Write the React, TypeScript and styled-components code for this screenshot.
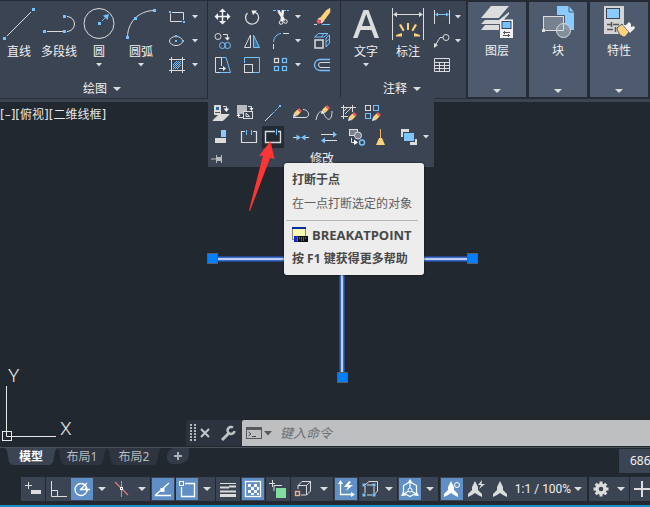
import React from 'react';
import styled, { createGlobalStyle, css } from 'styled-components';

const C = {
  ribbon: '#3b4453',
  dark: '#222830',
  edge: '#252b37',
  card: '#4e5b6e',
  gray: '#dcdcdc',
  blue: '#74c2ff',
  active: '#5f8fc4',
  gold: '#ffd27a',
  red: '#f2575c',
};

const Global = createGlobalStyle`
  * { box-sizing: border-box; }
  body {
    margin: 0;
    background: ${C.dark};
    color: #f0f0f0;
    font: 12px/16px "Noto Sans", "Noto Sans CJK SC", sans-serif;
    overflow: hidden;
  }
  button, input { font: inherit; color: inherit; border: 0; padding: 0; margin: 0; background: none; }
`;

const Page = styled.div`
  display: flex;
  flex-direction: column;
  min-height: 100vh;
  overflow: hidden;
`;

/* ---------- ribbon ---------- */

const Ribbon = styled.header`
  display: flex;
  background: ${C.ribbon};
  border-top: 1px solid ${C.edge};
  position: relative;
  z-index: 2;
  padding-bottom: 4px;
  box-shadow: inset 0 -3px ${C.ribbon}, inset 0 -4px ${C.edge};
`;

const Panel = styled.section<{ $w: number }>`
  position: relative;
  flex: 0 0 ${p => p.$w}px;
  display: flex;
  flex-direction: column;
  height: 97px;
  border-right: 1px solid ${C.edge};
`;

const PanelBody = styled.div<{ $pad?: number }>`
  display: flex;
  padding-left: ${p => p.$pad ?? 0}px;
  height: 80px;
`;

const PanelTitle = styled.button`
  display: flex;
  align-items: center;
  justify-content: center;
  gap: 6px;
  height: 16px;
  padding-right: 3px;
`;

const LargeButton = styled.button<{ $w: number }>`
  width: ${p => p.$w}px;
  display: flex;
  flex-direction: column;
  align-items: center;
  padding-top: 7px;
  white-space: nowrap;
  gap: 3px;

  span { margin-top: 1px; }
`;

const SmallColumn = styled.div`
  display: flex;
  flex-direction: column;
  padding: 4px 0 0 3px;
`;

const ToolGrid = styled.div`
  display: grid;
  grid-template-columns: 20px 20px 30px 20px;
  grid-auto-rows: 24px;
  column-gap: 10px;
  padding: 4px 0 0 4px;
`;

const Tool = styled.button<{ $gap?: number }>`
  display: flex;
  align-items: center;
  gap: ${p => p.$gap ?? 4}px;
  height: 24px;
`;

const Cards = styled.div`
  display: flex;
  gap: 3px;
  padding-left: 1px;
  background: ${C.edge};
`;

const Card = styled.button`
  width: 58px;
  height: 96px;
  background: ${C.card};
  display: flex;
  flex-direction: column;
  align-items: center;
  padding: 4px 0 4px;
  gap: 5px;
  border-top: 1px solid ${C.edge};

  > :last-child { margin-top: auto; }
`;

const CardEnd = styled.div`
  width: 1px;
`;

/* ---------- expanded modify panel ---------- */

const Flyout = styled.div`
  position: absolute;
  left: 0;
  top: 96px;
  width: 226px;
  background: ${C.ribbon};
  padding: 4px 1px 0;
`;

const FlyRow = styled.div`
  display: flex;
  height: 24px;
`;

const FlyTool = styled.button<{ $space?: boolean; $on?: boolean }>`
  width: 24px;
  height: 24px;
  display: flex;
  align-items: center;
  justify-content: center;
  margin-left: ${p => (p.$space ? 4 : 0)}px;
  ${p => p.$on && css`
    background: #222a34;
    background-clip: content-box;
    padding: 1px;
  `}
`;

const FlyMore = styled(Tool)`
  margin-left: 2px;
`;

const FlyFooter = styled.div`
  display: flex;
  align-items: center;
  height: 18px;
  padding: 1px 0 0 2px;

  span { margin-left: 87px; }
`;

const Tip = styled.div`
  position: absolute;
  left: 76px;
  top: 162px;
  width: 140px;
  height: 112px;
  padding: 9px 6px 0 2px;
  background: #ededed;
  border-radius: 3px;
  white-space: nowrap;
  box-shadow: 0 0 2px #111;
`;

const TipLine = styled.div<{ $bold?: boolean }>`
  display: flex;
  align-items: center;
  gap: 4px;
  height: 16px;
  margin: 0 0 8px 6px;
  font-weight: ${p => (p.$bold ? 700 : 400)};
  color: ${p => (p.$bold ? '#484848' : '#606060')};
`;

const CommandName = styled.span`
  font: 700 13px/16px "Open Sans", sans-serif;
`;

const TipRule = styled.hr`
  border: 0;
  height: 1px;
  margin: 0 0 6px;
  background: #b4b4b4;
`;

const Pointer = styled.svg`
  position: absolute;
  left: 38px;
  top: 138px;
  pointer-events: none;
`;

/* ---------- drawing area ---------- */

const Canvas = styled.main`
  position: relative;
  flex: 1;
  display: flex;
  flex-direction: column;
  justify-content: space-between;
  border-bottom: 1px solid #4b4f56;
`;

const ViewLabel = styled.div`
  padding-top: 5px;
  color: #e6e6e6;
  font-family: "DejaVu Sans", "Noto Sans CJK SC", sans-serif;
`;

const Geometry = styled.svg`
  position: absolute;
  left: 206px;
  top: 150px;
`;

const Ucs = styled.svg`
  position: absolute;
  left: 0;
  bottom: 4px;
`;

const CommandBar = styled.form`
  display: flex;
  height: 26px;
  margin: 0 0 1px 186px;
  background: #2c333f;
  border-radius: 3px 0 0 0;
`;

const CommandTools = styled.div`
  flex: 0 0 56px;
  display: flex;
  align-items: center;
  gap: 4px;
  padding-left: 4px;

  button { display: flex; }
`;

const CommandField = styled.label`
  flex: 1;
  display: flex;
  align-items: center;
  gap: 2px;
  padding-left: 4px;
  background: #bebfc1;
  color: #55585c;
  border-radius: 2px 0 0 0;

  input {
    flex: 1;
    min-width: 0;
    margin-left: 2px;
    font-size: 13px;
    font-style: italic;
    outline: 0;
  }
  input::placeholder { color: #6c6e71; opacity: 1; }
`;

/* ---------- layout tabs ---------- */

const TabBar = styled.nav`
  display: flex;
  height: 28px;
  padding-left: 5px;
`;

const Tab = styled.button<{ $on?: boolean; $w: number }>`
  width: ${p => p.$w}px;
  height: 17px;
  background: ${p => (p.$on ? C.ribbon : '#2e3440')};
  color: ${p => (p.$on ? '#fff' : '#b8bcc2')};
  font-weight: ${p => (p.$on ? 700 : 400)};
  clip-path: polygon(0 0, 100% 0, calc(100% - 2px) 3px, calc(100% - 4px) 14px, calc(100% - 7px) 100%, 7px 100%, 4px 14px, 2px 3px);
`;

const AddTab = styled.button`
  width: 22px;
  height: 16px;
  margin-left: 6px;
  display: flex;
  align-items: center;
  justify-content: center;
  background: #343b48;
  border-radius: 8px 0 10px 6px;
`;

const Coordinates = styled.output`
  margin: 1px 0 0 auto;
  width: 31px;
  height: 24px;
  padding-left: 11px;
  line-height: 23px;
  background: ${C.ribbon};
  overflow: hidden;
`;

/* ---------- status bar ---------- */

const StatusBar = styled.footer`
  display: flex;
  gap: 1px;
  height: 31px;
  padding: 1px 0 4px 21px;
  border-bottom: 2px solid #1e8fc6;
  overflow: hidden;
`;

const Group = styled.div<{ $w: number; $pad?: number; $apart?: number }>`
  flex: 0 0 ${p => p.$w}px;
  display: flex;
  height: 24px;
  padding: 1px 0 1px ${p => p.$pad ?? 0}px;
  margin-left: ${p => p.$apart ?? 0}px;
  background: ${C.ribbon};
  overflow: hidden;
`;

const Status = styled.button<{ $on?: boolean; $w?: number }>`
  flex: 0 0 ${p => p.$w ?? 22}px;
  height: 22px;
  display: flex;
  align-items: center;
  justify-content: center;
  background: ${p => (p.$on ? C.active : 'transparent')};
  white-space: nowrap;
`;

const ScaleValue = styled(Status)`
  font-family: Roboto, sans-serif;
`;

/* ---------- glyphs ---------- */

type IconProps = { w?: number; h?: number; children: React.ReactNode };
const Icon = ({ w = 20, h = 20, children }: IconProps) => (
  <svg width={w} height={h} viewBox={`0 0 ${w} ${h}`} fill="none" stroke={C.gray} aria-hidden="true">
    {children}
  </svg>
);

const Caret = ({ big }: { big?: boolean }) => (
  <svg width={big ? 8 : 6} height={4} viewBox={big ? '0 0 8 4' : '0 0 6 4'} aria-hidden="true">
    <path d={big ? 'M0 0H8L4 4Z' : 'M0 0H6L3 3.5Z'} fill={C.gray} />
  </svg>
);

const Dot = ({ x, y, s = 3 }: { x: number; y: number; s?: number }) => (
  <rect x={x - s / 2} y={y - s / 2} width={s} height={s} fill={C.blue} stroke="none" />
);

const LineIcon = () => (
  <Icon w={32} h={32}><path d="M4 28L28 4" /><Dot x={1.5} y={30.5} /><Dot x={30.5} y={1.5} /></Icon>
);
const PolylineIcon = () => (
  <Icon w={32} h={32}>
    <path d="M4 23.5H20M24 8.5a7.5 7.5 0 0 1 0 15" />
    <Dot x={1.5} y={23.5} /><Dot x={21.5} y={23.5} /><Dot x={21.5} y={8.5} />
  </Icon>
);
const CircleIcon = () => (
  <Icon w={32} h={32}>
    <circle cx="16" cy="15.5" r="15" /><Dot x={16.5} y={15.5} />
    <path d="M19 13L23 9" stroke={C.blue} /><path d="M26 6L20 7.500L24.500 12Z" fill={C.blue} stroke="none" />
  </Icon>
);
const ArcIcon = () => (
  <Icon w={32} h={32}>
    <path d="M2.500 29.500C2.500 14 14 2.500 29.500 2.500" />
    <Dot x={2.5} y={29.5} /><Dot x={10.5} y={10.5} /><Dot x={29.5} y={2.5} />
  </Icon>
);
const RectIcon = () => (
  <Icon><path d="M3.500 6.500V14.500H15M5 5.500H16.500V13" /><Dot x={3} y={5} s={2} /><Dot x={17} y={15} s={2} /></Icon>
);
const EllipseIcon = () => (
  <Icon><ellipse cx="9" cy="10" rx="6.500" ry="4.500" /><Dot x={9} y={10} s={2} /><Dot x={9} y={5} s={2} /><Dot x={16} y={10} s={2} /></Icon>
);
const HatchIcon = () => (
  <Icon>
    <path d="M4.500 2V18M15.500 2V18M2 4.500H18M2 15.500H18" />
    <path d="M6 10L10 6M6 14L14 6M10 14L14 10M6 12L12 6M8 14L14 8" stroke={C.blue} />
  </Icon>
);
const MoveIcon = () => (
  <Icon>
    <path d="M10.500 3V16M4 9.500H17" stroke="#f2f2f2" strokeWidth="1.500" />
    <path d="M10.500 1.500L14 5H7ZM10.500 17.500L14 14H7ZM2.500 9.500L6 6V13ZM18.500 9.500L15 6V13Z" fill="#f2f2f2" stroke="none" />
  </Icon>
);
const RotateIcon = () => (
  <Icon><path d="M5.500 6A6.500 6.500 0 1 0 15.500 7L13 5" strokeWidth="1.300" /><path d="M9.500 3.500H15L11 8Z" fill="#eee" stroke="none" /></Icon>
);
const TrimIcon = () => (
  <Icon>
    <path d="M1 3.500H8" stroke={C.blue} strokeDasharray="3 1" /><path d="M12 3.500H17" stroke={C.blue} strokeDasharray="2 1" />
    <path d="M6.500 4L12 13M11 3L9.500 14" strokeWidth="2.500" stroke="#f0f0f0" />
    <circle cx="9" cy="15.500" r="1.800" stroke="#f0f0f0" /><circle cx="13.500" cy="14.500" r="1.800" stroke="#f0f0f0" />
  </Icon>
);
const EraseIcon = () => (
  <Icon>
    <path d="M8 12L15 3.500L17.500 2V5L11 14Z" fill={C.gold} stroke={C.gold} strokeWidth="1.500" />
    <path d="M7 10.500L11.500 14.500L9.500 16.500L5.500 13Z" fill="#eee" stroke="none" /><circle cx="7" cy="14.500" r="2.300" fill={C.red} stroke="none" />
    <path d="M2 17.500H5" /><path d="M10 17.500H18" stroke={C.blue} />
  </Icon>
);
const CopyIcon = () => (
  <Icon>
    <circle cx="6" cy="5.500" r="3" /><path d="M11 3.500H15.500V7" /><path d="M12.500 6.500H18L15.500 9.500Z" fill="#eee" stroke="none" />
    <g stroke={C.blue}><circle cx="10.500" cy="14.500" r="3" /><circle cx="15.500" cy="14.500" r="3" /></g>
  </Icon>
);
const MirrorIcon = () => (
  <Icon><path d="M8.500 4V16.500H2.500Z" /><path d="M11.500 4V16.500H17.500Z" stroke={C.blue} fill="#3a739c" /></Icon>
);
const FilletIcon = () => (
  <Icon><path d="M1.500 11C2 6 5 3 9 2.500" stroke={C.blue} /><path d="M1.500 13V18M11 2.500H17" /></Icon>
);
const BoxIcon = () => (
  <Icon>
    <rect x="3" y="9" width="8" height="8" strokeWidth="1.500" />
    <path d="M2.500 6L6.500 2.500H16L12 6ZM14 7L17.500 4V12L14 16Z" stroke={C.blue} /><path d="M9 6L12 2.500M14 11L17.500 8" stroke={C.blue} />
  </Icon>
);
const StretchIcon = () => (
  <Icon><path d="M8 17.500H3.500V2.500H9.500V11" /><path d="M10 2.500H14L18.500 17.500H8" stroke={C.blue} /><path d="M7 13.500H13" /><path d="M11 11L14 13.500L11 16Z" fill="#eee" stroke="none" /></Icon>
);
const ScaleIcon = () => (
  <Icon><path d="M2.500 8V2.500H17.500V17.500H11" stroke={C.blue} /><rect x="2.500" y="9.500" width="8" height="8" /></Icon>
);
const ArrayIcon = () => (
  <Icon><rect x="2.500" y="3.500" width="4" height="4" strokeWidth="1.200" /><g stroke={C.blue} strokeWidth="1.200"><rect x="10.500" y="3.500" width="4" height="4" /><rect x="2.500" y="11.500" width="4" height="4" /><rect x="10.500" y="11.500" width="4" height="4" /></g></Icon>
);
const OffsetIcon = () => (
  <Icon><path d="M18 4.500H8A5.500 5.500 0 0 0 8 15.500H18" stroke={C.blue} strokeWidth="1.300" /><path d="M18 7.500H9A2.500 2.500 0 0 0 9 12.500H18" /></Icon>
);
const TextIcon = () => (
  <Icon w={32} h={32}><path d="M3 30L13.500 2H18.500L29 30H24.500L21.500 22H10.500L7.500 30ZM12 18H20.500L16.200 6Z" fill={C.gray} stroke="none" /></Icon>
);
const DimensionIcon = () => (
  <Icon w={32} h={32}>
    <path d="M.5 0V32M31.500 0V32M2 6.500H30" /><path d="M1 6.500L5 4V9ZM31 6.500L27 4V9Z" fill={C.gray} stroke="none" />
    <g fill={C.gold} stroke="none">
      <path d="M15 15H17V22H15Z" /><path d="M4 27L10 25V28.500H4ZM28 27L22 25V28.500H28Z" />
      <path d="M7 17L9 16L12.500 22L11 23.500ZM25 17L23 16L19.500 22L21 23.500Z" />
    </g>
  </Icon>
);
const LinearIcon = () => (
  <Icon><path d="M2.500 3V17M17.500 3V17" /><path d="M4 7.500H16" stroke={C.blue} /><path d="M3 7.500L6 5.500V9.500ZM17 7.500L14 5.500V9.500Z" fill={C.blue} stroke="none" /></Icon>
);
const LeaderIcon = () => (
  <Icon><circle cx="14" cy="6.500" r="3" /><path d="M11 6.500H8L3.500 14" /><path d="M2 17V12L6 14Z" fill={C.gray} stroke="none" /></Icon>
);
const TableIcon = () => (
  <Icon><path d="M2.500 3.500H17.500V16.500H2.500ZM2.500 7.500H17.500M2.500 10.500H17.500M2.500 13.500H17.500M7.500 7V17M12.500 7V17" /></Icon>
);

const LayersIcon = () => (
  <Icon w={32} h={32}>
    <g fill={C.gray} stroke="none"><path d="M10 0H28L18 12H0ZM4 14H18L28 6V8L19 18H0ZM4 19H18V24H0Z" /></g>
    <path d="M0 12.500H18L28 1" stroke={C.card} />
    <rect x="19" y="13.500" width="13" height="18.500" fill="#f3f3f3" stroke="none" />
    <rect x="21" y="15.500" width="9" height="7" fill={C.blue} stroke={C.ribbon} />
    <path d="M22 26.500H29M22 29.500H29M23.500 25V28M27.500 28V31" stroke="#555" />
  </Icon>
);
const BlockIcon = () => (
  <Icon w={32} h={32}>
    <path d="M15 0H27L32 6V24H15Z" fill="#8acbff" stroke="none" /><path d="M27 0V6H32" stroke={C.card} />
    <rect x="1.500" y="10.500" width="20" height="14" fill="#778190" /><rect x="0" y="23" width="3" height="3" fill={C.gray} stroke="none" />
    <path d="M0 9.500H22.500V18" stroke={C.card} /><circle cx="21.500" cy="24.500" r="7" fill="#8993a0" fillOpacity=".9" /><path d="M15 24.500H21.500V17.500" />
  </Icon>
);
const PropertiesIcon = () => (
  <Icon w={32} h={32}>
    <rect x="1" y="0" width="20" height="28" fill="#d4d4d4" stroke="none" /><rect x="3.500" y="2.500" width="13" height="10" fill="#8acbff" stroke={C.ribbon} />
    <path d="M4 18.500H8M10 18.500H16M8.500 16V21M4 23.500H10M12.500 21V26" stroke="#555" strokeWidth="1.500" />
    <path d="M14 22L19 18L26 26L22 31C18 31 15 27 14 22Z" fill={C.gold} stroke={C.card} />
    <path d="M20 19L23 19L26 16L28 18V21L31 20L32 22L29 25L27 27Z" fill="#f4f4f4" stroke="none" />
  </Icon>
);

const Pencil = ({ x, y }: { x: number; y: number }) => (
  <g stroke="none" transform={`translate(${x} ${y})`}>
    <path d="M0 9L1 5L4 8Z" fill="#e9e9e9" /><path d="M1 5L4.500 1.500L7.500 4.500L4 8Z" fill={C.gold} /><path d="M4.500 1.500L6 0L9 3L7.500 4.500Z" fill={C.red} />
  </g>
);
const SetLayerIcon = () => (
  <Icon><path d="M3.500 2.500H9.500V11.500H3.500Z" fill={C.gray} /><rect x="5" y="4" width="3" height="3" fill="#2f6da3" stroke="none" /><path d="M4 9.500H9" stroke="#555" /><path d="M2 17.500L8 11.500H18L12 17.500Z" fill={C.gray} /><path d="M12 3.500H15.500V6" /><path d="M12.500 5.500H18L15.500 9Z" fill="#fff" stroke="none" /></Icon>
);
const ChangeSpaceIcon = () => (
  <Icon><rect x="2" y="2" width="10" height="9" fill="#b8bbc0" stroke="none" /><rect x="8.500" y="8.500" width="9" height="7" fill={C.ribbon} /><path d="M11 10L14.500 13.500H11Z" /><path d="M13 3.500H16.500V6M8 14.500H3.500V12" /><path d="M14.500 5H18.500L16.500 8ZM1.500 13H5.500L3.500 10.500Z" fill="#fff" stroke="none" /></Icon>
);
const LengthenIcon = () => (
  <Icon><path d="M2 18L9 11" /><path d="M9 11L16 4" stroke={C.blue} strokeDasharray="3 1" /><Dot x={17} y={3} s={2} /></Icon>
);
const EditPolylineIcon = () => (
  <Icon><path d="M2 14.500H14C20 14.500 18 6.500 12 6.500" /><Pencil x={2} y={5} /></Icon>
);
const EditSplineIcon = () => (
  <Icon><path d="M1 17C3 8 6 7 9 11C12 18 17 19 17 8" /><Pencil x={6} y={2} /></Icon>
);
const EditHatchIcon = () => (
  <Icon><path d="M4.500 2V16M13.500 2V9M2 4.500H17M2 13.500H9M6 11L12 5M5 8L8 5" /><Pencil x={9} y={9} /></Icon>
);
const EditArrayIcon = () => (
  <Icon><rect x="2.500" y="2.500" width="5" height="5" /><g stroke={C.blue}><rect x="10.500" y="2.500" width="5" height="5" /><rect x="2.500" y="10.500" width="5" height="5" /></g><Pencil x={9} y={9} /></Icon>
);
const AlignIcon = () => (
  <Icon><rect x="10" y="3" width="5" height="7" fill="#8acbff" stroke="none" /><rect x="4" y="11" width="11" height="5" fill={C.gray} stroke="none" /></Icon>
);
const BreakIcon = () => (
  <Icon><path d="M6 4.500H2.500V15.500H17.500V4.500H14" strokeWidth="1.200" /><path d="M7.500 3V8M12.500 3V8" stroke={C.blue} /></Icon>
);
const BreakPointIcon = () => (
  <Icon><path d="M12 4.500H2.500V15.500H17.500V4.500H15" strokeWidth="1.400" /><path d="M13.500 2V8" stroke={C.blue} /></Icon>
);
const JoinIcon = () => (
  <Icon><path d="M2 10.500H6M14 10.500H18" /><path d="M10 10.500L5.500 7.500V13.500ZM10 10.500L14.500 7.500V13.500Z" fill={C.blue} stroke="none" /></Icon>
);
const ReverseIcon = () => (
  <Icon><path d="M2 7.500H15M5 13.500H18" /><path d="M18 7.500L14 4.500V10.500ZM2 13.500L6 10.500V16.500Z" fill={C.blue} stroke="none" /></Icon>
);
const CopyNestedIcon = () => (
  <Icon><rect x="2.500" y="2.500" width="8" height="6" fill="#778190" /><circle cx="11" cy="8.500" r="3.500" fill="#778190" /><path d="M4.500 11V15.500H8" /><path d="M7 12.500L11 15.500L7 18Z" fill="#fff" stroke="none" /><circle cx="15" cy="15.500" r="2.500" stroke={C.blue} strokeWidth="1.400" /></Icon>
);
const OverkillIcon = () => (
  <Icon><path d="M9.500 2V12" stroke="#f1b45e" /><path d="M8 11H11L14 18H5Z" fill={C.gold} stroke="none" /></Icon>
);
const DrawOrderIcon = () => (
  <Icon><rect x="2" y="2" width="8" height="8" fill={C.gray} stroke="none" /><rect x="11" y="12" width="7" height="6" fill={C.gray} stroke="none" /><rect x="4.500" y="5.500" width="11" height="9" fill="#7cc5ff" stroke={C.ribbon} /></Icon>
);
const PinIcon = () => (
  <Icon w={12} h={10}><path d="M0 5H5M5.500 1V9M10.500 1V9" stroke="#bbb" /><rect x="5" y="3" width="6" height="4" fill="#bbb" stroke="none" /></Icon>
);
const CommandIcon = () => (
  <svg width="16" height="18" viewBox="0 0 16 18" fill="none" aria-hidden="true">
    <rect x=".5" y="3.500" width="15" height="11" stroke="#55585c" /><path d="M0 3H16V6H0Z" fill="#55585c" /><path d="M2.500 8L5 10L2.500 12M6 12.500H10" stroke="#44474b" />
  </svg>
);
const WindowIcon = () => (
  <svg width="16" height="16" viewBox="0 0 16 16" aria-hidden="true">
    <rect x=".5" y=".5" width="13" height="12" fill="#fbf8b0" stroke="#8c8c8c" /><path d="M0 0H14V2H0Z" fill="#0b2aa8" />
    <rect x="2" y="9" width="14" height="6" fill="#111" /><path d="M2 9H6V15H2Z" fill="#1128c8" /><path d="M5 11H8M9 11H14M5 13H7M9 13H13" stroke="#aaa" strokeDasharray="1 1" />
  </svg>
);

/* status bar glyphs, 20 x 20 */
const DynInput = () => <Icon><path d="M2 6.500H9M5.500 3V10" /><rect x="8.500" y="11.500" width="9" height="3" fill={C.gray} /></Icon>;
const Ortho = () => <Icon><path d="M2.500 2V17.500H18M2.500 11.500H8.500V17.500" /></Icon>;
const Polar = () => <Icon><circle cx="9" cy="10.500" r="6" stroke="#fff" strokeWidth="1.300" /><path d="M8 10.500H18M8 11L15 4M13 8.500L15.500 12.500" stroke="#fff" strokeWidth="1.300" /></Icon>;
const Iso = () => <Icon><path d="M3 3L16 16" stroke="#e07779" strokeWidth="1.200" /><path d="M9.500 2V18" stroke="#69c08a" /><rect x="8.500" y="8.500" width="2" height="2" fill={C.ribbon} stroke="#fff" /></Icon>;
const Track = () => <Icon><path d="M2 16.500H18M2 16.500L16 4" stroke="#fff" strokeWidth="1.300" /><rect x="7.500" y="9" width="4" height="4" fill="#fff" stroke="none" /></Icon>;
const Osnap = () => <Icon><path d="M8 4.500H17.500V17.500H4.500V8" stroke="#fff" strokeWidth="1.300" /><rect x="2.500" y="2.500" width="4" height="4" stroke="#fff" /></Icon>;
const Weight = () => <Icon><path d="M2 4.500H18" /><path d="M2 8.500H11M11 7.500H18M2 12.500H11M11 12.500H18" strokeWidth="2" /><path d="M2 16.500H18" strokeWidth="3" /></Icon>;
const Transparency = () => (
  <Icon><rect x="2.500" y="2.500" width="15" height="15" stroke="#fff" strokeWidth="1.300" />
    <path d="M5 5H8V8H5ZM11 5H14V8H11ZM8 8H11V11H8ZM14 8H16V11H14ZM5 11H8V14H5ZM11 11H14V14H11ZM8 14H11V16H8ZM14 14H16V16H14Z" fill="#fff" stroke="none" /></Icon>
);
const Cycle = () => <Icon><path d="M1 4.500H7M4.500 1V8" /><path d="M6 12V6.500H14" stroke={C.gray} /><rect x="8" y="9" width="10" height="10" fill="#83dca0" stroke="none" /></Icon>;
const Osnap3d = () => <Icon><path d="M5 10V6.500L9 2.500H17.500V12L13.500 16H8M5 6.500H13.500V16M13.500 6.500L17.500 2.500" /><rect x="2.500" y="12.500" width="4" height="4" stroke="#f0ae8c" strokeWidth="1.400" /></Icon>;
const DynUcs = () => <Icon><path d="M4.500 3V15.500H17" stroke="#fff" strokeWidth="1.300" /><path d="M4.500 1L7 5H2ZM19 15.500L15 13V18ZM13 2L8 8H12L10 12L17 6H12.500L15 3Z" fill="#fff" stroke="none" /></Icon>;
const Filter = () => <Icon><path d="M5 7V14M5 6L9 2.500H17.500V12L14 16M7 6H13M14 8V14M7 16H12" /><Dot x={4} y={6} /><Dot x={14} y={6} /><Dot x={4} y={16} /><Dot x={14} y={16} /></Icon>;
const Gizmo = () => <Icon><path d="M10 3L16.500 6.500V14L10 17.500L3.500 14V6.500ZM10 3V11L4 15M10 11L16 15" stroke="#fff" strokeWidth="1.200" /><path d="M10 0L12.500 4H7.500ZM1 17L3 13L6 16.500ZM19 17L17 13L14 16.500Z" fill="#fff" stroke="none" /><circle cx="10" cy="11" r="2" stroke="#fff" fill={C.active} /></Icon>;
const Person = ({ kind }: { kind?: 'ring' | 'bolt' }) => (
  <Icon><path d="M9 2L12 8V11L16 15V18L12 16L9 14L6 16L2 18V15L6 11V8Z" fill={kind === 'ring' ? '#fff' : C.gray} stroke="none" />
    {kind === 'ring' && <circle cx="15" cy="6" r="2.500" stroke="#fff" />}
    {kind === 'bolt' && <path d="M16 1L12 6H15L13 10L19 5H15.500Z" fill={C.gray} stroke="none" />}
  </Icon>
);
const Gear = () => (
  <Icon><circle cx="10" cy="10" r="4" strokeWidth="3.500" /><g strokeWidth="3"><path d="M10 2.500V5M10 15V17.500M2.500 10H5M15 10H17.500M4.700 4.700L6.400 6.400M13.600 13.600L15.300 15.300M15.300 4.700L13.600 6.400M6.400 13.600L4.700 15.300" /></g></Icon>
);

type ToolDef = { name: string; icon: React.ReactNode; menu?: boolean; space?: boolean; on?: boolean };

const drawLarge = [
  { name: '直线', icon: <LineIcon />, w: 38 },
  { name: '多段线', icon: <PolylineIcon />, w: 42 },
  { name: '圆', icon: <CircleIcon />, w: 38, menu: true },
  { name: '圆弧', icon: <ArcIcon />, w: 46, menu: true },
];
const drawSmall: ToolDef[] = [
  { name: '矩形', icon: <RectIcon />, menu: true },
  { name: '椭圆', icon: <EllipseIcon />, menu: true },
  { name: '图案填充', icon: <HatchIcon />, menu: true },
];
const modify: ToolDef[] = [
  { name: '移动', icon: <MoveIcon /> }, { name: '旋转', icon: <RotateIcon /> },
  { name: '修剪', icon: <TrimIcon />, menu: true }, { name: '删除', icon: <EraseIcon /> },
  { name: '复制', icon: <CopyIcon /> }, { name: '镜像', icon: <MirrorIcon /> },
  { name: '圆角', icon: <FilletIcon />, menu: true }, { name: '分解', icon: <BoxIcon /> },
  { name: '拉伸', icon: <StretchIcon /> }, { name: '缩放', icon: <ScaleIcon /> },
  { name: '阵列', icon: <ArrayIcon />, menu: true }, { name: '偏移', icon: <OffsetIcon /> },
];
const annotate: ToolDef[] = [
  { name: '线性', icon: <LinearIcon />, menu: true },
  { name: '引线', icon: <LeaderIcon />, menu: true },
  { name: '表格', icon: <TableIcon /> },
];
const flyRows: ToolDef[][] = [
  [
    { name: '设为当前图层', icon: <SetLayerIcon /> }, { name: '更改空间', icon: <ChangeSpaceIcon /> },
    { name: '拉长', icon: <LengthenIcon />, space: true }, { name: '编辑多段线', icon: <EditPolylineIcon />, space: true },
    { name: '编辑样条曲线', icon: <EditSplineIcon /> }, { name: '编辑图案填充', icon: <EditHatchIcon /> },
    { name: '编辑阵列', icon: <EditArrayIcon /> },
  ],
  [
    { name: '对齐', icon: <AlignIcon /> }, { name: '打断', icon: <BreakIcon />, space: true },
    { name: '打断于点', icon: <BreakPointIcon />, on: true }, { name: '合并', icon: <JoinIcon />, space: true },
    { name: '反转', icon: <ReverseIcon />, space: true }, { name: '复制嵌套对象', icon: <CopyNestedIcon />, space: true },
    { name: '删除重复对象', icon: <OverkillIcon /> }, { name: '绘图次序', icon: <DrawOrderIcon />, space: true },
  ],
];

const SmallTool = ({ tool, gap }: { tool: ToolDef; gap?: number }) => (
  <Tool aria-label={tool.name} $gap={gap}>{tool.icon}{tool.menu && <Caret />}</Tool>
);
const Drop = ({ w = 17 }: { w?: number }) => <Status $w={w} aria-label="选项"><Caret big /></Status>;

export default function App() {
  return (
    <Page>
      <Global />
      <Ribbon>
        <Panel $w={208}>
          <PanelBody>
            {drawLarge.map(t => (
              <LargeButton key={t.name} $w={t.w}>{t.icon}<span>{t.name}</span>{t.menu && <Caret />}</LargeButton>
            ))}
            <SmallColumn>{drawSmall.map(t => <SmallTool key={t.name} tool={t} gap={5} />)}</SmallColumn>
          </PanelBody>
          <PanelTitle>绘图<Caret big /></PanelTitle>
        </Panel>

        <Panel $w={133}>
          <ToolGrid>{modify.map(t => <SmallTool key={t.name} tool={t} gap={3} />)}</ToolGrid>
          <Flyout>
            {flyRows.map((row, i) => (
              <FlyRow key={i}>
                {row.map(t => <FlyTool key={t.name} aria-label={t.name} $space={t.space} $on={t.on}>{t.icon}</FlyTool>)}
                {i === 1 && <FlyMore aria-label="更多"><Caret /></FlyMore>}
              </FlyRow>
            ))}
            <FlyFooter><PinIcon /><span>修改</span></FlyFooter>
          </Flyout>
          <Tip role="tooltip">
            <TipLine $bold>打断于点</TipLine>
            <TipLine>在一点打断选定的对象</TipLine>
            <TipRule />
            <TipLine $bold><WindowIcon /><CommandName>BREAKATPOINT</CommandName></TipLine>
            <TipLine $bold>按 F1 键获得更多帮助</TipLine>
          </Tip>
          <Pointer width="40" height="76" viewBox="0 0 40 76" aria-hidden="true">
            <path d="M24.500 2L28.500 20L24 19L4 72L3 71.500L17 16.500L13 17Z" fill="#ff3434" />
          </Pointer>
        </Panel>

        <Panel $w={126}>
          <PanelBody $pad={4}>
            <LargeButton $w={42}><TextIcon /><span>文字</span><Caret /></LargeButton>
            <LargeButton $w={42}><DimensionIcon /><span>标注</span></LargeButton>
            <SmallColumn>{annotate.map(t => <SmallTool key={t.name} tool={t} gap={3} />)}</SmallColumn>
          </PanelBody>
          <PanelTitle>注释<Caret big /></PanelTitle>
        </Panel>

        <Cards>
          <Card><LayersIcon /><span>图层</span><Caret big /></Card>
          <Card><BlockIcon /><span>块</span><Caret big /></Card>
          <Card><PropertiesIcon /><span>特性</span><Caret big /></Card>
          <CardEnd />
        </Cards>
      </Ribbon>

      <Canvas>
        <ViewLabel>[–][俯视][二维线框]</ViewLabel>
        <Geometry width="274" height="134" viewBox="0 0 274 134" aria-hidden="true">
          <g fill="none">
            <path d="M6 7H266M136 7V126" stroke="#24478c" strokeWidth="6" />
            <path d="M6 7H266M136 7V126" stroke="#3f68c0" strokeWidth="4" />
            <path d="M6 7H266M136 7V126" stroke="#b9cdf5" strokeWidth="2" />
          </g>
          <g fill="#0080ff" stroke="#5b6068">
            <rect x="1.500" y="1.500" width="10" height="10" />
            <rect x="261.500" y="1.500" width="10" height="10" />
            <rect x="131.500" y="120.500" width="10" height="10" />
          </g>
        </Geometry>
        <Ucs width="84" height="84" viewBox="0 -8 84 84" fill="none" stroke="#e8e8e8" aria-hidden="true">
          <path d="M6.500 19V69.500H56" />
          <rect x="2.500" y="64.500" width="9" height="9" />
          <g fill="#e8e8e8" stroke="none" fontFamily="Roboto, sans-serif" fontWeight="300" fontSize="19">
            <text x="8" y="15">Y</text>
            <text x="60" y="68">X</text>
          </g>
        </Ucs>
        <CommandBar>
          <CommandTools>
            <svg width="6" height="18" viewBox="0 0 6 18" aria-hidden="true">
              <path d="M1 0V18M5 0V18" stroke="#b5b7ba" strokeWidth="2" strokeDasharray="2 1" />
            </svg>
            <button type="button" aria-label="关闭">
              <svg width="10" height="10" viewBox="0 0 10 10"><path d="M1 1L9 9M9 1L1 9" stroke="#c4c6c9" strokeWidth="2" /></svg>
            </button>
            <button type="button" aria-label="自定义">
              <svg width="26" height="16" viewBox="0 0 26 16"><path d="M8 15L15 8" stroke="#bfc1c4" strokeWidth="3" /><path d="M19 2.500A3.500 3.500 0 1 0 20.500 6" stroke="#bfc1c4" strokeWidth="2.500" fill="none" /></svg>
            </button>
          </CommandTools>
          <CommandField>
            <CommandIcon />
            <svg width="12" height="5" viewBox="0 0 12 5" aria-hidden="true"><path d="M0 0H8L4 4.500Z" fill="#55585c" /></svg>
            <input aria-label="命令" placeholder="键入命令" />
          </CommandField>
        </CommandBar>
      </Canvas>

      <TabBar>
        <Tab $w={52} $on>模型</Tab>
        <Tab $w={50}>布局1</Tab>
        <Tab $w={54}>布局2</Tab>
        <AddTab aria-label="新建布局">
          <svg width="8" height="8" viewBox="0 0 8 8"><path d="M4 0V8M0 4H8" stroke="#aeb2b8" strokeWidth="2" /></svg>
        </AddTab>
        <Coordinates>686</Coordinates>
      </TabBar>

      <StatusBar>
        <Group $w={24}><Status $w={24} aria-label="动态输入"><DynInput /></Status></Group>
        <Group $w={104}>
          <Status $w={25} aria-label="正交"><Ortho /></Status>
          <Status $on aria-label="极轴追踪"><Polar /></Status><Drop w={18} />
          <Status aria-label="等轴测草图"><Iso /></Status><Drop />
        </Group>
        <Group $w={24} $pad={1}><Status $on aria-label="对象捕捉追踪"><Track /></Status></Group>
        <Group $w={39}><Status $on aria-label="对象捕捉"><Osnap /></Status><Drop /></Group>
        <Group $w={24}><Status $w={24} aria-label="线宽"><Weight /></Status></Group>
        <Group $w={24} $pad={1}><Status $on aria-label="透明度"><Transparency /></Status></Group>
        <Group $w={24}><Status $w={24} aria-label="选择循环"><Cycle /></Status></Group>
        <Group $w={42}><Status $w={24} aria-label="三维对象捕捉"><Osnap3d /></Status><Drop /></Group>
        <Group $w={24} $pad={1}><Status $on aria-label="动态 UCS"><DynUcs /></Status></Group>
        <Group $w={38}><Status aria-label="选择过滤"><Filter /></Status><Drop w={16} /></Group>
        <Group $w={40} $pad={1}><Status $on aria-label="小控件"><Gizmo /></Status><Drop /></Group>
        <Group $w={147} $pad={1} $apart={1}>
          <Status $on aria-label="注释可见性"><Person kind="ring" /></Status>
          <Status $w={26} aria-label="自动缩放"><Person kind="bolt" /></Status>
          <Status $w={24} aria-label="注释比例"><Person /></Status>
          <ScaleValue $w={60}>1:1 / 100%</ScaleValue>
          <Status $w={10} aria-label="选择比例"><Caret big /></Status>
        </Group>
        <Group $w={40} $apart={1}><Status $w={24} aria-label="切换工作空间"><Gear /></Status><Drop w={16} /></Group>
        <Group $w={24}>
          <Status $w={24} aria-label="注释监视器"><Icon><path d="M10 2V18M2 10H18" strokeWidth="2" /></Icon></Status>
        </Group>
      </StatusBar>
    </Page>
  );
}
